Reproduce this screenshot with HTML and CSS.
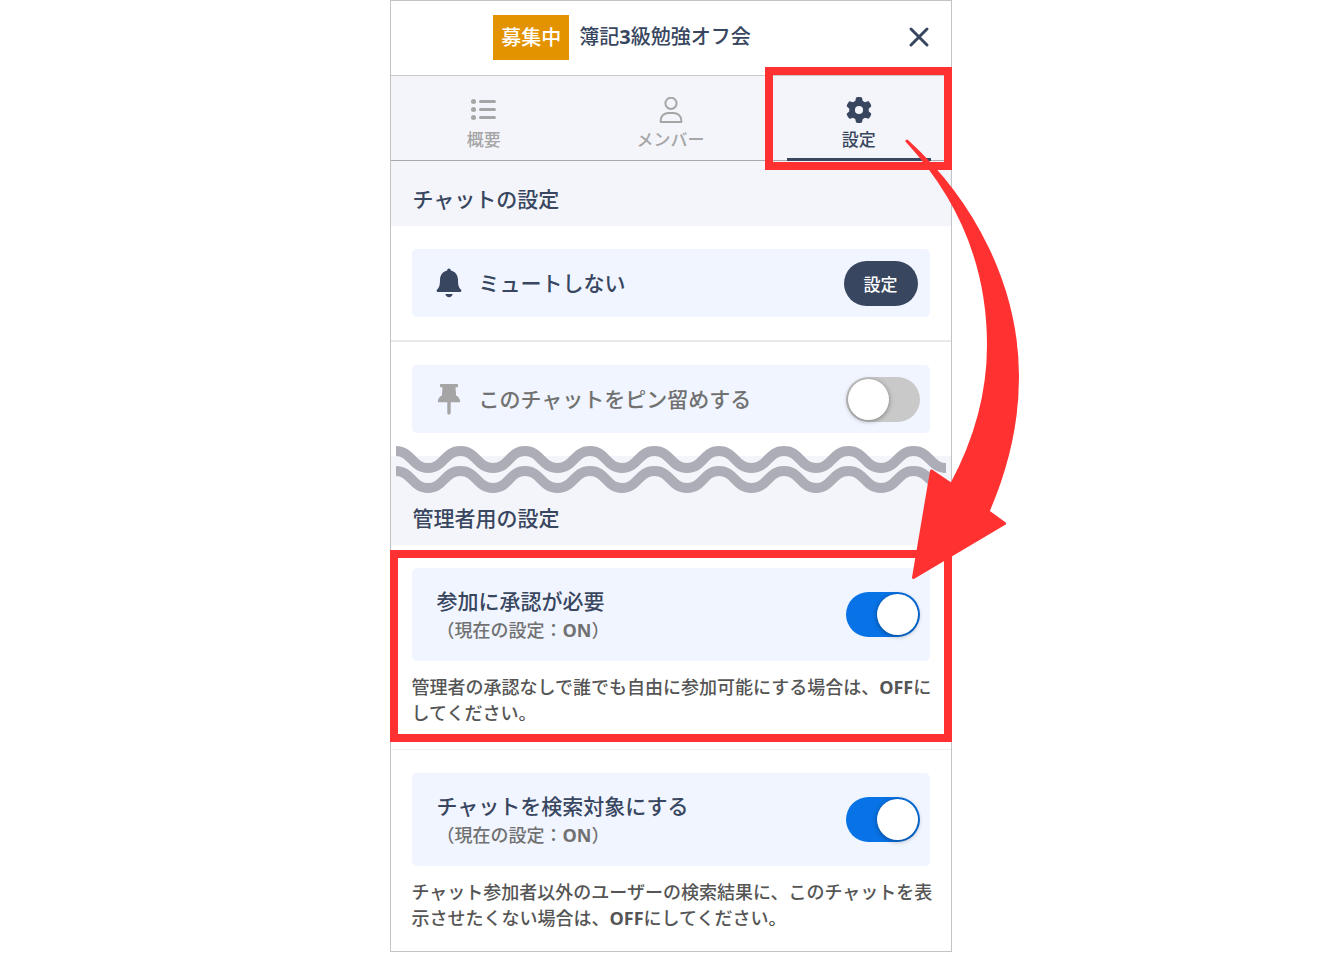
FILE: index.html
```html
<!DOCTYPE html>
<html lang="ja">
<head>
<meta charset="utf-8">
<meta name="viewport" content="width=device-width, initial-scale=1">
<title>簿記3級勉強オフ会</title>
<link rel="stylesheet" href="styles.css">
</head>
<body>
<main class="panel">
  <header class="panel-header">
    <span class="badge">募集中</span>
    <h1 class="panel-title">簿記<span class="latin">3</span>級勉強オフ会</h1>
    <button class="close" type="button" aria-label="閉じる">
      <svg width="22" height="22" viewBox="0 0 22 22" fill="none" stroke="currentColor" stroke-width="3" stroke-linecap="round"><path d="M3 3l16 16M19 3L3 19"/></svg>
    </button>
  </header>

  <nav class="tabs">
    <a class="tab" href="#overview">
      <svg class="tab-icon" viewBox="0 0 26 26" fill="none" stroke="currentColor" stroke-width="3" stroke-linecap="round"><path d="M9.500 4.500h14M9.500 12.500h14M9.500 20.500h14"/><g fill="currentColor" stroke="none"><circle cx="2.500" cy="4.500" r="2.500"/><circle cx="2.500" cy="12.500" r="2.500"/><circle cx="2.500" cy="20.500" r="2.500"/></g></svg>
      <span>概要</span>
    </a>
    <a class="tab" href="#members">
      <svg class="tab-icon" viewBox="0 0 26 26" fill="none" stroke="currentColor" stroke-width="2" stroke-linejoin="round"><circle cx="14" cy="6.3" r="5.6"/><path d="M3.700 25v-1.500c0-4.500 3.600-7.500 8-7.500h4.600c4.400 0 8 3 8 7.500V25z"/></svg>
      <span>メンバー</span>
    </a>
    <a class="tab tab-active" href="#settings" aria-current="page">
      <svg class="tab-icon" viewBox="0 0 512 512" fill="currentColor"><path d="M495.900 166.600c3.200 8.700 .5 18.400-6.400 24.600l-43.300 39.400c1.100 8.300 1.700 16.800 1.700 25.400s-.6 17.100-1.700 25.400l43.300 39.400c6.900 6.200 9.600 15.900 6.400 24.600c-4.400 11.900-9.700 23.300-15.800 34.300l-4.700 8.100c-6.600 11-14 21.400-22.100 31.200c-5.900 7.200-15.700 9.600-24.500 6.800l-55.700-17.700c-13.400 10.300-28.200 18.900-44 25.400l-12.500 57.100c-2 9.100-9 16.300-18.200 17.800c-13.800 2.300-28 3.500-42.500 3.500s-28.700-1.200-42.500-3.500c-9.200-1.500-16.200-8.700-18.200-17.800l-12.500-57.100c-15.800-6.500-30.600-15.100-44-25.400L83.100 425.900c-8.800 2.800-18.600 .3-24.500-6.800c-8.100-9.800-15.500-20.200-22.100-31.200l-4.700-8.100c-6.100-11-11.400-22.400-15.800-34.300c-3.200-8.700-.5-18.400 6.400-24.600l43.300-39.400C64.600 273.100 64 264.600 64 256s.6-17.100 1.700-25.400L22.400 191.200c-6.900-6.200-9.600-15.900-6.400-24.600c4.400-11.900 9.700-23.300 15.800-34.300l4.700-8.100c6.600-11 14-21.400 22.100-31.200c5.900-7.200 15.700-9.600 24.500-6.800l55.700 17.700c13.400-10.300 28.200-18.900 44-25.400l12.500-57.100c2-9.100 9-16.300 18.200-17.800C227.300 1.200 241.500 0 256 0s28.700 1.200 42.500 3.500c9.200 1.500 16.200 8.700 18.200 17.800l12.500 57.100c15.800 6.500 30.600 15.100 44 25.400l55.700-17.700c8.800-2.800 18.600-.3 24.500 6.800c8.100 9.800 15.500 20.200 22.100 31.200l4.700 8.100c6.100 11 11.400 22.400 15.800 34.300zM256 336a80 80 0 1 0 0-160 80 80 0 1 0 0 160z"/></svg>
      <span>設定</span>
    </a>
  </nav>

  <section>
    <h2 class="section-title">チャットの設定</h2>
    <div class="setting">
      <div class="card">
        <svg class="card-icon" viewBox="0 0 26 32" fill="#384660"><path d="M13 1.500c1.100 0 1.800.8 1.800 2 4.300.9 7.200 4.500 7.200 9.200 0 5 .6 7.700 2.900 9.900.9.900.6 2.400-.8 2.400H1.900C.5 25 .2 23.500 1.100 22.600 3.400 20.400 4 17.700 4 12.700c0-4.700 2.900-8.300 7.200-9.200 0-1.200.7-2 1.800-2z"/><path d="M9.300 27h7.400c-.3 1.900-1.800 3.200-3.700 3.200S9.600 28.900 9.300 27z"/></svg>
        <span class="card-label">ミュートしない</span>
        <button class="pill" type="button">設定</button>
      </div>
    </div>
    <div class="setting setting-ruled">
      <div class="card">
        <svg class="card-icon" viewBox="0 0 26 32" fill="#a5a5a5"><path d="M5.200 1h15.600c.7 0 1.200.5 1.200 1.200v1c0 .6-.5 1-1.200 1h-1.300l.6 8.300c2 1 3.500 2.600 4 5.200.2 1-.3 1.500-1.100 1.500h-8.300v10.500c0 1.100-.6 1.900-1.700 1.900s-1.700-.8-1.700-1.900V19.200H3c-.8 0-1.300-.5-1.100-1.500.5-2.600 2-4.200 4-5.200l.6-8.300H5.200c-.7 0-1.200-.4-1.200-1v-1C4 1.500 4.500 1 5.200 1z"/></svg>
        <label class="card-label muted" for="pin">このチャットをピン留めする</label>
        <input class="toggle" type="checkbox" role="switch" id="pin">
      </div>
    </div>
  </section>

  <section>
    <h2 class="section-title section-title-cut">管理者用の設定
      <svg class="waves" viewBox="0 0 550 48" fill="none" stroke="#acadb6" stroke-width="10" aria-hidden="true">
        <defs><path id="wave" d="M-.5 5C16 5 16 22 32 22S48 5 64.500 5 80.500 22 97 22 113 5 129 5s16 17 32.500 17S177.500 5 194 5s16 17 32 17S242 5 258.500 5s16 17 32.500 17S307 5 323 5s16 17 32.500 17S371.500 5 388 5s16 17 32 17S436 5 452.500 5s16 17 32.500 17S501 5 517.500 5 534 22 550 22"/></defs>
        <use href="#wave"/><use href="#wave" y="20"/>
      </svg>
    </h2>
    <div class="setting setting-marked">
      <div class="card card-tall">
        <label class="card-label" for="approval">参加に承認が必要<small class="state">（現在の設定：<span class="latin">ON</span>）</small></label>
        <input class="toggle" type="checkbox" role="switch" id="approval" checked>
      </div>
      <p class="note">管理者の承認なしで誰でも自由に参加可能にする場合は、<span class="latin">OFF</span>にしてください。</p>
    </div>
    <div class="setting setting-last">
      <div class="card card-tall">
        <label class="card-label" for="search">チャットを検索対象にする<small class="state">（現在の設定：<span class="latin">ON</span>）</small></label>
        <input class="toggle" type="checkbox" role="switch" id="search" checked>
      </div>
      <p class="note">チャット参加者以外のユーザーの検索結果に、このチャットを表示させたくない場合は、<span class="latin">OFF</span>にしてください。</p>
    </div>
  </section>

  <svg class="arrow" width="640" height="600" viewBox="391 1 640 600" fill="#ff3131" stroke="#ff3131" stroke-width="3" stroke-linejoin="round" aria-hidden="true"><path d="M907 141C973 201 1017.500 286 1017.500 377 1017.500 425 1006 470 988 511.500L1004.500 523.500 913.500 577.500 931.500 471 951.500 484.500C975 441 988.500 395 988.500 345 988.500 262 956 194 907 141z"/></svg>
</main>
</body>
</html>
```
FILE: styles.css
```css
*, *::before, *::after { box-sizing: border-box; }

body {
  margin: 0;
  background: #fff;
  color: #384660;
  font-family: "Open Sans", "Noto Sans CJK JP", sans-serif;
  font-weight: 500;
}

.latin { font-weight: 700; }

.panel {
  position: relative;
  isolation: isolate;
  max-width: 562px;
  margin: 0 auto;
  border: 1px solid #c3c3c4;
}

.panel-header {
  position: relative;
  display: flex;
  align-items: center;
  justify-content: center;
  gap: 10px;
  height: 75px;
  padding: 0 97px 2px 0;
  border-bottom: 1px solid #c8c8c8;
}
.badge {
  padding: 0 8px;
  background: #e39300;
  color: #fff;
  font-size: 20px;
  line-height: 45px;
}
.panel-title {
  margin: 0;
  font-size: 20px;
  font-weight: 500;
  line-height: 30px;
}
.close {
  position: absolute;
  top: 25px;
  right: 21px;
  display: flex;
  padding: 0;
  border: 0;
  background: none;
  color: #384660;
}

.tabs {
  display: grid;
  grid-template-columns: repeat(3, 1fr);
  background: #f4f5fa;
  border-bottom: 1px solid #a9a9ac;
}
.tab {
  position: relative;
  display: flex;
  flex-direction: column;
  align-items: center;
  gap: 4px;
  padding: 21px 0 7px;
  color: #a6a6a6;
  font-size: 17px;
  line-height: 26px;
  text-decoration: none;
}
.tab-icon { width: 26px; height: 26px; }
.tab-active {
  padding-left: 3px;
  color: #384660;
}
.tab-active::before {
  content: "";
  position: absolute;
  right: 20px;
  bottom: -1px;
  left: 23px;
  height: 3px;
  background: #384660;
}
.tab-active::after {
  content: "";
  position: absolute;
  z-index: 1;
  inset: -9px -1px -10px 1px;
  border: 8px solid #ff3131;
}

.section-title {
  position: relative;
  margin: 0;
  padding: 23px 22px 12px;
  background: #f4f5fa;
  font-size: 21px;
  font-weight: 500;
  line-height: 30px;
}
.section-title-cut { padding: 47px 22px 12px; }
.waves {
  position: absolute;
  top: -10px;
  left: 5px;
  width: calc(100% - 10px);
}

.setting {
  position: relative;
  padding: 23px 21px;
}
.setting-ruled { border-top: 2px solid #e9e9ea; }
.setting-last {
  padding-bottom: 20px;
  border-top: 1px solid #f0f0f4;
}
.card {
  display: flex;
  align-items: center;
  gap: 17px;
  min-height: 68px;
  padding: 0 10px 0 24px;
  border-radius: 5px;
  background: #f0f5ff;
}
.card-tall {
  min-height: 93px;
  padding-left: 25px;
}
.card-icon { flex: none; width: 26px; height: 32px; }
.card-label {
  flex: 1;
  font-size: 21px;
  line-height: 30px;
}
.muted { color: #717171; }
.state {
  display: block;
  color: #717171;
  font-size: 18px;
  line-height: 28px;
}
.pill {
  width: 74px;
  height: 45px;
  margin-right: 2px;
  padding: 0;
  border: 0;
  border-radius: 23px;
  background: #384660;
  color: #fff;
  font: inherit;
  font-size: 17px;
}
.toggle {
  appearance: none;
  flex: none;
  width: 74px;
  height: 45px;
  margin: 0;
  padding: 2px;
  border-radius: 23px;
  background: #c9c9c9;
}
.toggle::before {
  content: "";
  display: block;
  width: 41px;
  height: 41px;
  border-radius: 50%;
  background: #fff;
  box-shadow: 0 1px 5px rgba(0, 0, 0, 0.4);
}
.toggle:checked { background: #0873e6; }
.toggle:checked::before { margin-left: auto; }
.note {
  margin: 0 -14px 0 0;
  padding-top: 13px;
  color: #555;
  font-size: 18px;
  line-height: 26px;
}
.setting-marked::after {
  content: "";
  position: absolute;
  z-index: 1;
  inset: 5px -1px 7px;
  border: 8px solid #ff3131;
}

.arrow {
  position: absolute;
  z-index: 2;
  top: 0;
  left: 0;
  pointer-events: none;
}
```
